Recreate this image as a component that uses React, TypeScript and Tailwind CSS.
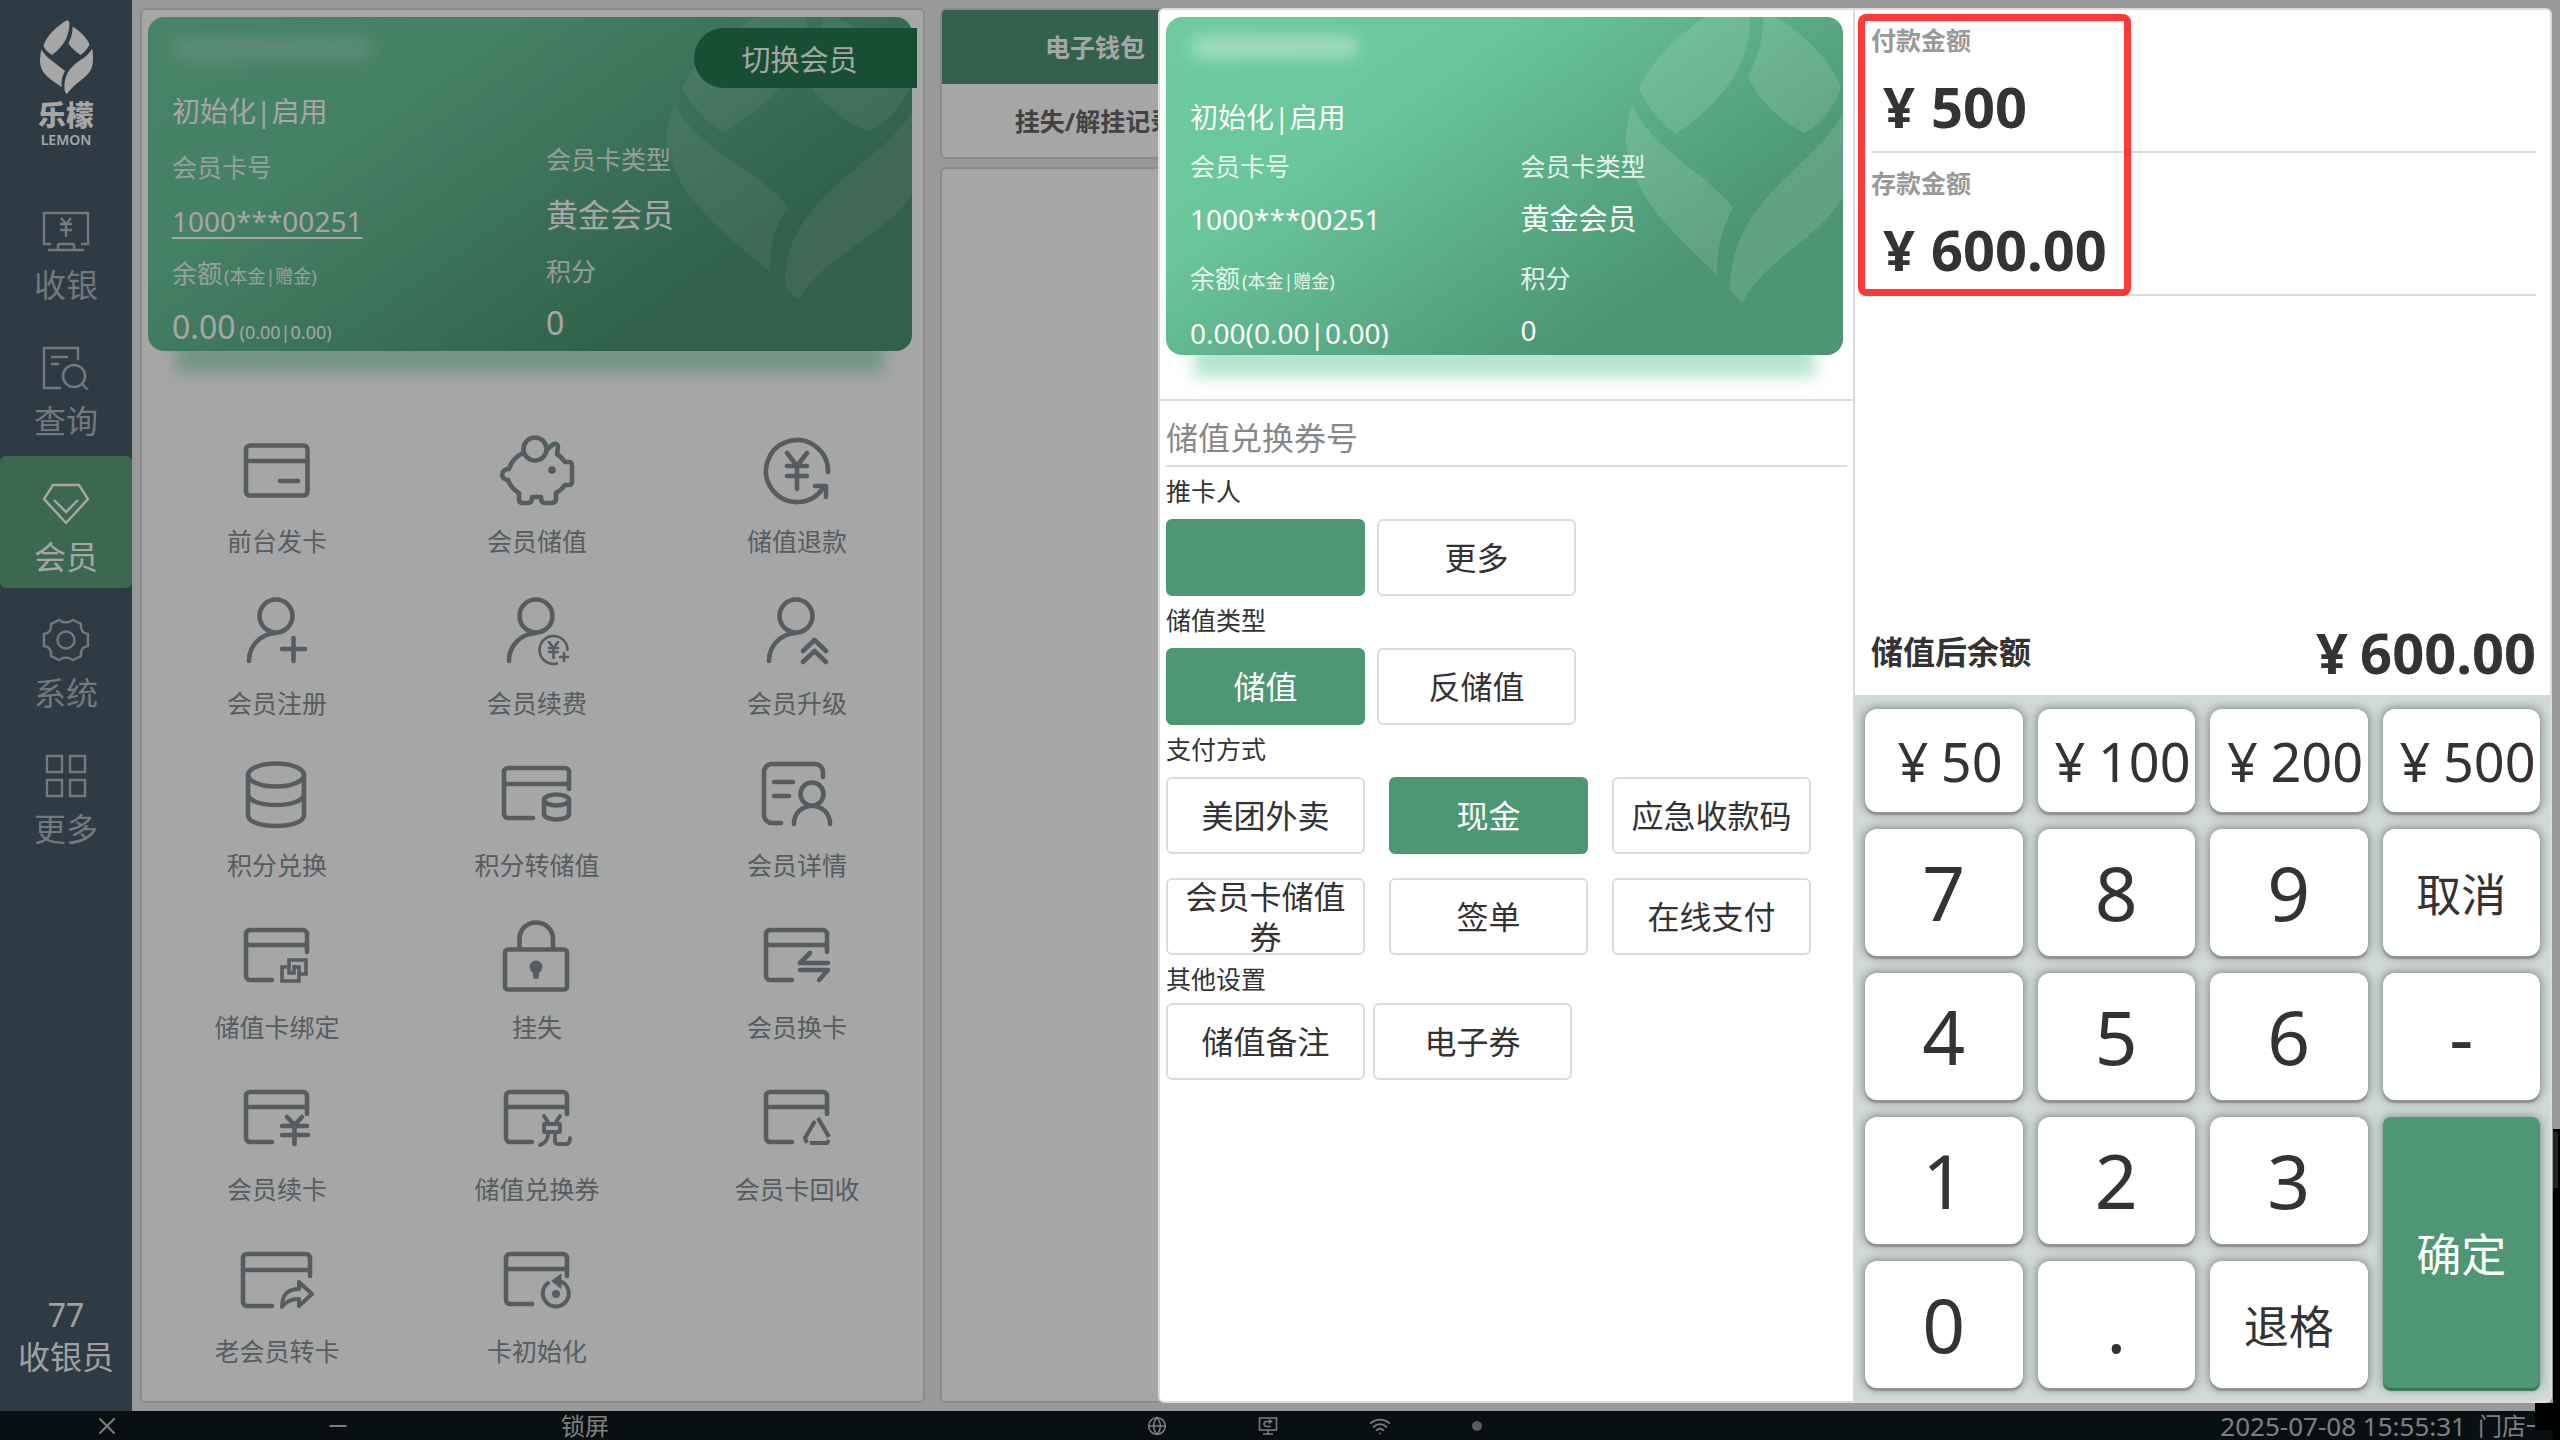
import type { ReactNode } from "react";
import { Globe, Wifi, X, Minus } from "lucide-react";

/* ---------- brand drawings ---------- */

function Logo() {
  return (
    <svg viewBox="39 19 55 76" className="h-[76px] w-[55px]" fill="currentColor" aria-hidden="true">
      <path d="M67 20 L69.500 22 C69.500 36 64 46 52 55 C48 52.500 45 50 43.500 46 C46 36 57 26 67 20Z" />
      <path d="M72.500 26.500 C80 31 87 38 89.500 44.500 C87.500 49 84 52.500 80.500 55 C76 52 71 48 68.500 43.500 C71 38 73 32 72.500 26.500Z" />
      <path d="M41.500 49.500 C46 58 57 64 65 71 C62 76 61 81 61.700 87 C52 80 41 75 40 62 C40 57 40.500 53 41.500 49.500Z" />
      <path d="M92 48.500 C86 62 64 62 64.500 88 C64.500 91 65 93 67 94 C70 89 75 85 80 81 C88 75 93 70 93 60 C93 55 93 52 92 48.500Z" />
    </svg>
  );
}

function LeafMark({ className }: { className: string }) {
  return (
    <svg viewBox="0 0 217 338" preserveAspectRatio="none" className={className} fill="#ffffff" fillOpacity="0.12" aria-hidden="true">
      <path d="M79 0 C50 20 22 48 13 72 C22 90 35 107 50 117 C95 85 125 50 124 0Z" />
      <path d="M137 0 C138 22 131 42 122 59 C132 83 155 105 179 116 C197 105 208 90 215 71 C206 45 180 18 150 0Z" />
      <path d="M7 88 C22 130 80 155 107 191 C94 215 90 240 91 258 C50 218 5 180 0 125 C0 110 3 97 7 88Z" />
      <path d="M217 96 C190 150 104 180 104 273 L116 286 C140 240 190 225 217 180Z" />
    </svg>
  );
}

/* ---------- function icons, drawn on a 76 x 76 board ---------- */

function Icon({ children }: { children: ReactNode }) {
  return (
    <svg viewBox="0 0 76 76" className="size-[76px]" fill="none" stroke="currentColor" strokeWidth="4.6" strokeLinecap="round" strokeLinejoin="round" aria-hidden="true">
      {children}
    </svg>
  );
}

const openCard = <path d="M68 33 V15 a4 4 0 0 0 -4 -4 H11 a4 4 0 0 0 -4 4 V57 a4 4 0 0 0 4 4 H33 M7 26 H68" />;
const person = (
  <>
    <circle cx="37" cy="21" r="16.500" />
    <path d="M37 38 C22 39 10 50 10 66" />
  </>
);

const functions: { label: string; icon: ReactNode }[] = [
  {
    label: "前台发卡",
    icon: (
      <>
        <rect x="7" y="12.500" width="61.500" height="50" rx="4" />
        <path d="M7 28 H68 M41 48 H59" />
      </>
    ),
  },
  {
    label: "会员储值",
    icon: (
      <>
        <circle cx="36" cy="16" r="11.500" />
        <path d="M24 20 C16 24 12 29 10 36 C1 36 1 47 9 47 C11 52 15 57 20 60 V66 Q20 70 24 70 H29 Q33 70 33 64 H42 Q42 70 46 70 H52 Q57 70 57 66 V60 C62 57 64 55 66 52 H70 Q73 52 73 48 V33 Q73 29 70 29 H66 C64 26 61 23 58 21 L59 14 C59 10 55 9 49 16" />
        <circle cx="53" cy="37" r="3.800" fill="currentColor" stroke="none" />
      </>
    ),
  },
  {
    label: "储值退款",
    icon: (
      <>
        <path d="M69 39 A31 31 0 1 0 64 55" />
        <path d="M56 53 H67 V64" />
        <path d="M28 20 L38 33 L48 20 M28 33 H48 M28 43 H48 M38 33 V56" />
      </>
    ),
  },
  {
    label: "会员注册",
    icon: (
      <>
        {person}
        <path d="M43 54 H66 M54.500 43 V66" />
      </>
    ),
  },
  {
    label: "会员续费",
    icon: (
      <>
        {person}
        <g strokeWidth="2.600">
          <path d="M68.500 55 A14 14 0 1 0 58 68.500" />
          <path d="M50 47 L54.500 53 L59 47 M50 53 H59 M50 57 H59 M54.500 53 V63 M61 62 H69 M65 58 V66" />
        </g>
      </>
    ),
  },
  {
    label: "会员升级",
    icon: (
      <>
        {person}
        <path d="M44 56 L55.500 45 L67 56 M44 67 L55.500 56 L67 67" />
      </>
    ),
  },
  {
    label: "积分兑换",
    icon: (
      <>
        <ellipse cx="37" cy="18" rx="28" ry="11.500" />
        <path d="M9 18 V58 C9 65 22 69 37 69 C52 69 65 65 65 58 V18 M9 38 C11 45 24 48 37 48 C50 48 63 45 65 38" />
      </>
    ),
  },
  {
    label: "积分转储值",
    icon: (
      <>
        <path d="M70 32 V15 a4 4 0 0 0 -4 -4 H9 a4 4 0 0 0 -4 4 V57 a4 4 0 0 0 4 4 H34 M5 27 H70" />
        <ellipse cx="57.500" cy="43" rx="12.500" ry="5.500" />
        <path d="M45 43 V57 C45 60 50 62.500 57.500 62.500 C65 62.500 70 60 70 57 V43" />
      </>
    ),
  },
  {
    label: "会员详情",
    icon: (
      <>
        <path d="M64 20 V15 a8 8 0 0 0 -8 -8 H13 a8 8 0 0 0 -8 8 V58 a8 8 0 0 0 8 8 H22 M15 25 H34 M15 39 H30" />
        <circle cx="53" cy="37" r="11.500" />
        <path d="M35 67 C35 56 43 49 53 49 C63 49 71 56 71 67" />
      </>
    ),
  },
  {
    label: "储值卡绑定",
    icon: (
      <>
        {openCard}
        <g strokeWidth="3.600" strokeLinecap="butt" strokeLinejoin="miter">
          <path d="M55 46 V54 H50 V41 H67 V55 H60" />
          <path d="M48 48 H43 V62 H60 V48 H54" />
        </g>
      </>
    ),
  },
  {
    label: "挂失",
    icon: (
      <>
        <rect x="6" y="30.500" width="62" height="40" rx="3" />
        <path d="M20.500 30 V20 C20.500 10 28 3.500 37 3.500 C46 3.500 54 10 54 20 V30" />
        <circle cx="37" cy="48" r="6.500" fill="currentColor" stroke="none" />
        <path d="M37 50 V57" strokeWidth="6" />
      </>
    ),
  },
  {
    label: "会员换卡",
    icon: (
      <>
        {openCard}
        <path d="M51 34 L41 44 H69 M41 51 H69 L60 61" />
      </>
    ),
  },
  {
    label: "会员续卡",
    icon: (
      <>
        {openCard}
        <path d="M48 36 L55.500 44 L63 36 M43 45 H68 M43 54 H69 M55.500 45 V63" />
      </>
    ),
  },
  {
    label: "储值兑换券",
    icon: (
      <>
        {openCard}
        <path strokeWidth="3.800" d="M45 35 L49 41 M61 35 L57 41 M45 43 H61 V51 H45 Z M49 53 C49 58 46 62 41 64 M56 53 V60 Q56 63 59 63 H67 Q71 63 71 57" />
      </>
    ),
  },
  {
    label: "会员卡回收",
    icon: (
      <>
        {openCard}
        <path strokeWidth="4" strokeLinecap="butt" strokeLinejoin="miter" d="M56 40 L46 57 L48 62 M59 37 L70 56 M51 62 H68 L70 59" />
      </>
    ),
  },
  {
    label: "老会员转卡",
    icon: (
      <>
        <path d="M71 33 V15 a4 4 0 0 0 -4 -4 H8 a4 4 0 0 0 -4 4 V59 a4 4 0 0 0 4 4 H33 M4 27 H71" />
        <path strokeWidth="4" d="M43 64 C43 52 48 46 60 46 V39 L73 51 L60 63 V56 C52 56 47 58 43 64Z" />
      </>
    ),
  },
  {
    label: "卡初始化",
    icon: (
      <>
        {openCard}
        <path strokeWidth="4" d="M49 40 A13 13 0 1 0 63 39" />
        <path d="M53 38 L62 31 V45Z" fill="currentColor" strokeWidth="1" />
        <circle cx="57" cy="51" r="4" fill="currentColor" stroke="none" />
      </>
    ),
  },
];

/* ---------- side navigation ---------- */

const navItems: { label: string; active?: boolean; icon: ReactNode }[] = [
  {
    label: "收银",
    icon: (
      <path d="M9 34 H2 V3 H46 V34 H39 M16 34 H32 M16 34 V40 M32 34 V40 M6 40 H42 M19 8 L24 14 L29 8 M18 14 H30 M18 20 H30 M24 14 V27" />
    ),
  },
  {
    label: "查询",
    icon: (
      <>
        <path d="M36 14 V2 H2 V42 H19 M9 11 H26 M9 18 H17" />
        <circle cx="32" cy="30" r="11" />
        <path d="M40 38 L46 44" />
      </>
    ),
  },
  {
    label: "会员",
    active: true,
    icon: <path d="M11 3 H37 L46 17 L24 41 L2 17 Z M12 18 L24 30 L36 18" />,
  },
  {
    label: "系统",
    icon: (
      <>
        <path d="M17 2 Q24 7 31 2 L39 6 Q38 15 46 16 V28 Q38 29 39 38 L31 42 Q24 37 17 42 L9 38 Q10 29 2 28 V16 Q10 15 9 6 Z" />
        <circle cx="24" cy="22" r="8.500" />
      </>
    ),
  },
  {
    label: "更多",
    icon: <path d="M5 2 H20 V18 H5 Z M28 2 H43 V18 H28 Z M5 26 H20 V42 H5 Z M28 26 H43 V42 H28 Z" />,
  },
];

function Sidebar() {
  return (
    <aside className="flex w-[132px] shrink-0 flex-col bg-[#485969] text-[#afbac2]">
      <div className="flex h-[184px] flex-col items-center pt-[19px] text-white">
        <Logo />
        <div className="text-[28px] leading-[40px] font-black">乐檬</div>
        <div className="text-[14px] leading-[10px] font-semibold">LEMON</div>
      </div>
      <nav className="flex flex-col gap-1">
        {navItems.map((item) => (
          <button
            key={item.label}
            type="button"
            className={
              item.active
                ? "flex h-[132px] flex-col items-center gap-1 rounded-md bg-[#5ea07b] pt-[26px] text-white"
                : "flex h-[132px] flex-col items-center gap-1 pt-[26px]"
            }
          >
            <svg viewBox="0 0 48 44" className="h-11 w-12" fill="none" stroke="currentColor" strokeWidth="2.400" aria-hidden="true">
              {item.icon}
            </svg>
            <span className="text-[32px] leading-[53px]">{item.label}</span>
          </button>
        ))}
      </nav>
      <div className="mt-auto pb-[33px] text-center text-[32px] leading-[42px] text-[#f4f6f8]">
        <div>77</div>
        <div>收银员</div>
      </div>
    </aside>
  );
}

/* ---------- member panel ---------- */

const cardSkin =
  "relative rounded-2xl bg-[linear-gradient(145deg,#6ecb9f_0%,#6ac69b_30%,#4c9673_75%,#4c9673_100%)] shadow-[0_50px_14px_-28px_rgba(110,203,159,0.5)]";

function MemberPanel() {
  return (
    <section className="relative rounded-md border-2 border-[#d6d6d6] bg-white">
      <div className="pt-[7px] pr-[11px] pl-[6px]">
        <div className={cardSkin}>
          <div className="absolute inset-y-0 right-0 w-[245px] overflow-hidden rounded-2xl">
            <LeafMark className="size-full" />
          </div>
          <div className="relative grid h-[334px] grid-cols-[374fr_366fr] pl-6 text-white">
            <div className="whitespace-nowrap">
              <div className="flex h-16 items-center">
                <span className="h-6 w-[200px] rounded-full bg-white/25 blur-[8px]" />
              </div>
              <div className="text-[28px] leading-[60px]">初始化|启用</div>
              <div className="text-[25px] leading-[52px] text-white/85">会员卡号</div>
              <a href="#card" className="block text-[28px] leading-[56px] underline decoration-2 underline-offset-[5px]">
                1000***00251
              </a>
              <div className="text-[25px] leading-[48px] text-white/85">
                余额<span className="ml-0.5 text-[18px]">(本金|赠金)</span>
              </div>
              <div className="text-[32px] leading-[53px]">
                0.00<span className="ml-1 text-[18px]">(0.00|0.00)</span>
              </div>
            </div>
            <div className="pt-[117px]">
              <div className="text-[25px] leading-[50px] text-white/85">会员卡类型</div>
              <div className="text-[32px] leading-[62px]">黄金会员</div>
              <div className="text-[25px] leading-[50px] text-white/85">积分</div>
              <div className="text-[32px] leading-[54px]">0</div>
            </div>
          </div>
        </div>
      </div>
      <button
        type="button"
        className="absolute top-[18px] right-[6px] h-[60px] w-[223px] rounded-l-full bg-[#267851] pt-1 pr-3 text-[29px] text-white"
      >
        切换会员
      </button>
      <div className="-mr-1 mt-[78px] grid auto-rows-[162px] grid-cols-3 pl-[5px] text-[#848f95]">
        {functions.map((f) => (
          <button key={f.label} type="button" className="flex flex-col items-center gap-[13px] pt-1">
            <Icon>{f.icon}</Icon>
            <span className="text-[25px] leading-[38px]">{f.label}</span>
          </button>
        ))}
      </div>
    </section>
  );
}

function RecordPanel() {
  return (
    <section className="flex flex-col gap-2">
      <div className="overflow-hidden rounded-md border-2 border-[#d6d6d6] bg-white">
        <div className="grid grid-cols-[306px_1fr] text-[25px] leading-[74px] font-bold whitespace-nowrap text-[#666]">
          <button type="button" className="h-[74px] bg-[#4d9774] text-white">
            电子钱包
          </button>
          <span className="bg-[#4d9774]" />
          <button type="button" className="h-[73px]">
            挂失/解挂记录
          </button>
        </div>
      </div>
      <div className="flex-1 rounded-md border-2 border-[#d6d6d6] bg-white" />
    </section>
  );
}

/* ---------- top-up dialog ---------- */

function Choice({ children, on, label }: { children?: ReactNode; on?: boolean; label?: string }) {
  return (
    <button
      type="button"
      aria-label={label}
      aria-pressed={!!on}
      className={
        (on ? "border-[#4d9774] bg-[#4d9774] text-white " : "border-[#dcdcdc] bg-white text-[#333] ") +
        "flex h-[77px] w-[199px] items-center justify-center rounded-md border-2 px-3 text-[32px] leading-[40px]"
      }
    >
      {children}
    </button>
  );
}

function GroupTitle({ children }: { children: ReactNode }) {
  return <div className="pb-1 leading-[48px]">{children}</div>;
}

function TopUpForm() {
  return (
    <div className="border-r-2 border-[#dcdcdc]">
      <div className="h-[391px] border-b-2 border-[#dcdcdc] pt-[7px] pr-[10px] pl-[6px]">
        <div className={cardSkin}>
          <div className="absolute inset-y-0 right-0 w-[217px] overflow-hidden rounded-2xl">
            <LeafMark className="size-full" />
          </div>
          <div className="relative grid h-[338px] grid-cols-[330fr_322fr] pl-6 text-white">
            <div className="whitespace-nowrap">
              <div className="flex h-[70px] items-start pt-[18px]">
                <span className="h-6 w-[170px] rounded-full bg-white/35 blur-[8px]" />
              </div>
              <div className="text-[28px] leading-[60px]">初始化|启用</div>
              <div className="text-[25px] leading-[38px] text-white/85">会员卡号</div>
              <div className="text-[28px] leading-[68px]">1000***00251</div>
              <div className="text-[25px] leading-[50px] text-white/85">
                余额<span className="ml-0.5 text-[18px]">(本金|赠金)</span>
              </div>
              <div className="text-[28px] leading-[54px]">0.00(0.00|0.00)</div>
            </div>
            <div className="pt-[130px]">
              <div className="text-[25px] leading-[38px] text-white/85">会员卡类型</div>
              <div className="text-[29px] leading-[68px]">黄金会员</div>
              <div className="text-[25px] leading-[50px] text-white/85">积分</div>
              <div className="text-[28px] leading-[54px]">0</div>
            </div>
          </div>
        </div>
      </div>
      <form className="px-[6px] text-[25px] text-[#333]">
        <input
          type="text"
          aria-label="储值兑换券号"
          placeholder="储值兑换券号"
          className="block h-[66px] w-full border-b-2 border-[#dcdcdc] pt-2 text-[32px] placeholder:text-[#888] focus:outline-none"
        />
        <GroupTitle>推卡人</GroupTitle>
        <div className="flex gap-3">
          <Choice on label="推卡人" />
          <Choice>更多</Choice>
        </div>
        <GroupTitle>储值类型</GroupTitle>
        <div className="flex gap-3">
          <Choice on>储值</Choice>
          <Choice>反储值</Choice>
        </div>
        <GroupTitle>支付方式</GroupTitle>
        <div className="flex flex-wrap gap-6">
          <Choice>美团外卖</Choice>
          <Choice on>现金</Choice>
          <Choice>应急收款码</Choice>
          <Choice>会员卡储值券</Choice>
          <Choice>签单</Choice>
          <Choice>在线支付</Choice>
        </div>
        <div className="leading-[48px]">其他设置</div>
        <div className="flex gap-2">
          <Choice>储值备注</Choice>
          <Choice>电子券</Choice>
        </div>
      </form>
    </div>
  );
}

function Yen() {
  return <span className="inline-block w-14 shrink-0 text-center">¥</span>;
}

function Amount({ id, label, value }: { id: string; label: string; value: string }) {
  return (
    <div className="h-[143px] border-b-2 border-[#dcdcdc]">
      <label htmlFor={id} className="block pt-[10px] text-[25px] leading-[40px] font-bold text-[#999]">
        {label}
      </label>
      <div className="flex h-[91px] items-center text-[56px] font-bold">
        <Yen />
        <input id={id} defaultValue={value} className="w-0 flex-1 pl-1 focus:outline-none" />
      </div>
    </div>
  );
}

const keySkin =
  "rounded-xl bg-white text-[#333] shadow-[0_3px_1px_#8d9496,0_0_8px_2px_rgba(90,100,100,0.6)] whitespace-nowrap";

function Key({ children, size = "digit" }: { children: ReactNode; size?: "digit" | "money" | "word" }) {
  const text = size === "digit" ? "text-[75px]" : size === "money" ? "text-[54px]" : "pt-1 text-[45px]";
  return (
    <button type="button" className={`${keySkin} ${text} flex items-center justify-center leading-none`}>
      {size === "money" && <Yen />}
      {children}
    </button>
  );
}

function Keypad() {
  return (
    <div className="grid grid-cols-4 grid-rows-[103px_127px_127px_127px_127px] gap-x-[15px] gap-y-[17px] bg-[#d2d9d9] px-[10px] pt-[14px] pb-[13px]">
      <Key size="money">50</Key>
      <Key size="money">100</Key>
      <Key size="money">200</Key>
      <Key size="money">500</Key>
      <Key>7</Key>
      <Key>8</Key>
      <Key>9</Key>
      <Key size="word">取消</Key>
      <Key>4</Key>
      <Key>5</Key>
      <Key>6</Key>
      <Key>-</Key>
      <Key>1</Key>
      <Key>2</Key>
      <Key>3</Key>
      <button
        type="button"
        className="row-span-2 rounded-lg bg-[#4d9774] pt-1 text-[45px] text-white shadow-[0_3px_1px_#3a7559,0_0_8px_2px_rgba(90,100,100,0.5)]"
      >
        确定
      </button>
      <Key>0</Key>
      <Key>.</Key>
      <Key size="word">退格</Key>
    </div>
  );
}

function PaymentPane() {
  return (
    <div className="relative flex flex-col text-[#333]">
      <div className="pr-[14px] pl-4">
        <Amount id="pay" label="付款金额" value="500" />
        <Amount id="deposit" label="存款金额" value="600.00" />
      </div>
      <div className="pointer-events-none absolute top-1 left-[3px] h-[282px] w-[273px] rounded-lg border-[7px] border-[#fc3a3a]" />
      <div className="mt-auto flex items-center justify-between pr-[14px] pl-4 font-bold">
        <span className="text-[32px]">储值后余额</span>
        <span className="text-[56px] leading-[86px]">
          <Yen />
          600.00
        </span>
      </div>
      <Keypad />
    </div>
  );
}

/* ---------- status bar ---------- */

function StatusBar() {
  return (
    <footer className="flex h-[30px] shrink-0 items-center bg-[#0e1a1f] pr-[10px] text-[24px] leading-[28px] text-[#c4c4c4]">
      <div className="flex w-[44%] items-center">
        <button type="button" aria-label="关闭" className="ml-[93px]">
          <X size={28} strokeWidth={1.6} />
        </button>
        <button type="button" aria-label="最小化" className="ml-[204px]">
          <Minus size={26} strokeWidth={2} />
        </button>
        <button type="button" className="ml-[210px]">
          锁屏
        </button>
      </div>
      <div className="ml-[25px] flex items-center gap-[91px]">
        <Globe size={20} strokeWidth={1.8} />
        <svg viewBox="0 0 20 20" className="size-5" fill="none" stroke="currentColor" strokeWidth="1.500" aria-hidden="true">
          <path d="M1.500 2 H18.500 V14 H1.500Z M10 14 V18 M5 18 H15 M13 5.500 H8.500 a2.500 2.500 0 0 0 0 5 H13 M11 3.500 L13.500 5.500 L11 7.500" />
        </svg>
        <Wifi size={22} strokeWidth={2} />
        <span className="-ml-[10px] size-[10px] rounded-full bg-[#8c8c8c]" />
      </div>
      <div className="ml-auto flex items-center gap-3 whitespace-nowrap">
        <time className="text-[26px]">2025-07-08 15:55:31</time>
        <span>门店一</span>
      </div>
    </footer>
  );
}

export default function App() {
  return (
    <div className="relative flex min-h-screen flex-col bg-[#ebebeb] font-['Noto_Sans','Noto_Sans_CJK_SC',sans-serif]">
      <div className="flex flex-1">
        <Sidebar />
        <main className="grid flex-1 grid-cols-[785fr_1611fr] gap-[15px] py-2 pr-[9px] pl-2">
          <MemberPanel />
          <RecordPanel />
        </main>
      </div>
      <StatusBar />
      <div className="absolute inset-0 bg-black/35" />
      <div className="absolute right-0 bottom-0 h-[312px] w-[7px] bg-black">
        <div className="mt-[3px] h-14 w-[5px] bg-[#222]" />
      </div>
      <div className="absolute right-0 bottom-[11px] h-[27px] w-[25px] bg-black" />
      <div
        role="dialog"
        aria-label="会员储值"
        className="absolute top-2 right-2 bottom-[38px] left-[1158px] grid grid-cols-2 overflow-hidden rounded-md border-2 border-[#dcdcdc] bg-white"
      >
        <TopUpForm />
        <PaymentPane />
      </div>
    </div>
  );
}
